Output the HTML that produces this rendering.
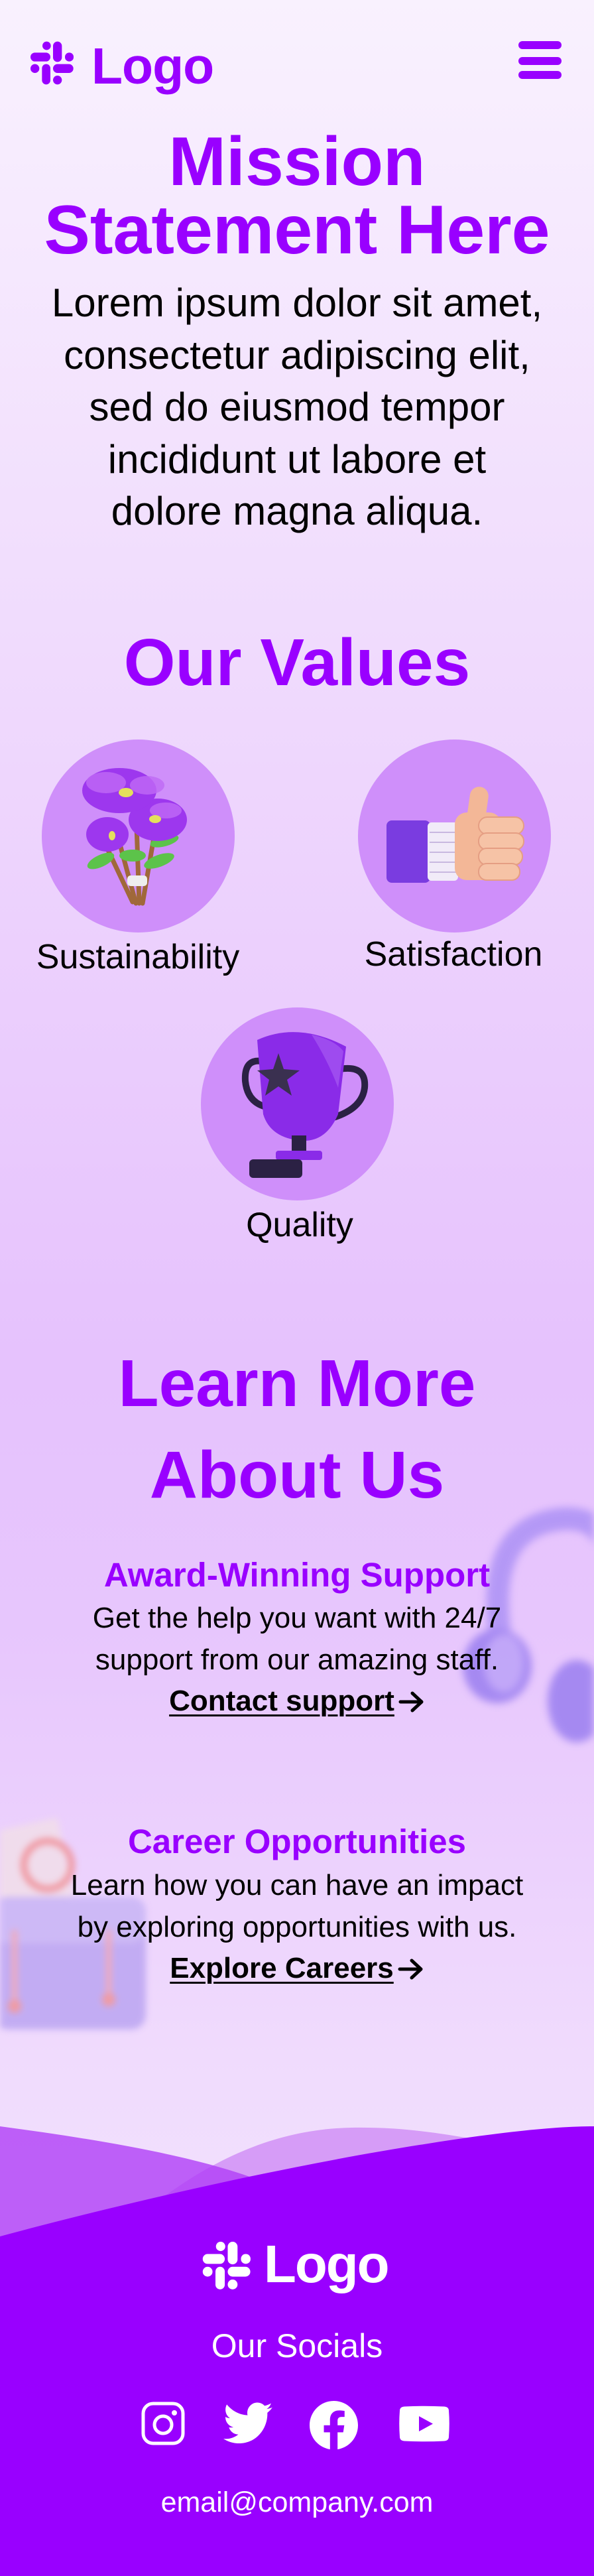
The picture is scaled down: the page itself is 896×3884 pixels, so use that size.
<!DOCTYPE html>
<html><head><meta charset="utf-8">
<style>
*{margin:0;padding:0;box-sizing:border-box}
html,body{width:896px;height:3884px;overflow:hidden}
body{position:relative;font-family:"Liberation Sans",Arial,sans-serif;
background:linear-gradient(180deg,#f9f1fe 0px,#f1defd 850px,#edd3fd 1300px,#e6c2fd 2050px,#e7c6fd 2450px,#f0dbfd 3100px,#f1dffd 3300px);}
.a{position:absolute}
.c{position:absolute;left:0;width:896px;text-align:center;white-space:nowrap}
.p{color:#9900ff;font-weight:bold}
.circ{position:absolute;width:291px;height:291px;border-radius:50%;background:#cf8ffa}
.lbl{position:absolute;font-size:52px;line-height:60px;color:#000;white-space:nowrap;transform:translateX(-50%)}
.body{font-size:44px;line-height:62.5px;color:#000}
.lnk{font-weight:bold}
.lnk u{text-decoration:underline;text-decoration-thickness:3px;text-underline-offset:6px}
.arr{display:inline-block;vertical-align:-4px;margin-left:6px}
</style></head><body>

<svg class="a" style="left:30px;top:50px" width="100" height="100" viewBox="0 0 300 300">
<g fill="#9900ff">
<rect x="150" y="38" width="40" height="92" rx="20"/>
<rect x="102" y="38" width="38" height="38" rx="19"/>
<rect x="48" y="88" width="90" height="40" rx="20"/>
<rect x="204" y="88" width="39" height="40" rx="19"/>
<rect x="48" y="140" width="40" height="40" rx="20"/>
<rect x="100" y="140" width="38" height="92" rx="19"/>
<rect x="150" y="140" width="92" height="40" rx="20"/>
<rect x="150" y="192" width="40" height="40" rx="20"/>
</g></svg>
<div class="a p" style="left:138px;top:62px;font-size:77px;line-height:76px;letter-spacing:-1px">Logo</div>
<svg class="a" style="left:780px;top:60px" width="70" height="62">
<g fill="#9900ff"><rect x="2" y="2" width="65" height="12" rx="6"/><rect x="2" y="26" width="65" height="12" rx="6"/><rect x="2" y="47" width="65" height="12" rx="6"/></g></svg>

<div class="c p" style="top:193px;font-size:104px;line-height:103px">Mission<br>Statement Here</div>
<div class="c" style="top:418px;font-size:60px;line-height:78.5px;color:#000">Lorem ipsum dolor sit amet,<br>consectetur adipiscing elit,<br>sed do eiusmod tempor<br>incididunt ut labore et<br>dolore magna aliqua.</div>

<div class="c p" style="top:939px;font-size:100px;line-height:120px">Our Values</div>

<div class="circ" style="left:63px;top:1115px"></div>
<div class="circ" style="left:540px;top:1115px"></div>
<div class="circ" style="left:303px;top:1519px"></div>

<svg class="a" style="left:0;top:0" width="896" height="1900">
<g stroke="#a0683a" stroke-width="7" fill="none" stroke-linecap="round">
<path d="M205 1362 L172 1240"/><path d="M210 1362 L205 1215"/><path d="M215 1362 L236 1240"/><path d="M200 1360 L155 1265"/>
</g>
<rect x="192" y="1320" width="30" height="16" rx="5" fill="#eee"/>
<g fill="#5cc34a">
<ellipse cx="152" cy="1298" rx="22" ry="9" transform="rotate(-25 152 1298)"/>
<ellipse cx="240" cy="1298" rx="24" ry="9" transform="rotate(-20 240 1298)"/>
<ellipse cx="248" cy="1268" rx="22" ry="8" transform="rotate(-15 248 1268)"/>
<ellipse cx="200" cy="1290" rx="20" ry="9"/>
</g>
<g fill="#9d37ee">
<ellipse cx="162" cy="1258" rx="32" ry="26"/>
<ellipse cx="238" cy="1236" rx="44" ry="32"/>
<ellipse cx="180" cy="1192" rx="56" ry="34"/>
</g>
<g fill="#c06af6" opacity=".8">
<ellipse cx="160" cy="1180" rx="30" ry="16"/>
<ellipse cx="222" cy="1184" rx="26" ry="14"/>
<ellipse cx="250" cy="1222" rx="24" ry="12"/>
</g>
<g fill="#e4e05c"><ellipse cx="190" cy="1195" rx="11" ry="7"/><ellipse cx="234" cy="1235" rx="9" ry="6"/><ellipse cx="169" cy="1260" rx="5" ry="7"/></g>

<rect x="583" y="1237" width="66" height="94" rx="8" fill="#7a3ce0"/>
<rect x="645" y="1240" width="46" height="88" rx="6" fill="#f1ebf8"/>
<g stroke="#c8b8e0" stroke-width="2"><line x1="648" y1="1255" x2="688" y2="1255"/><line x1="648" y1="1270" x2="688" y2="1270"/><line x1="648" y1="1285" x2="688" y2="1285"/><line x1="648" y1="1300" x2="688" y2="1300"/><line x1="648" y1="1315" x2="688" y2="1315"/></g>
<rect x="686" y="1225" width="70" height="102" rx="18" fill="#f3b797"/>
<rect x="706" y="1186" width="28" height="68" rx="14" fill="#f3b797" transform="rotate(8 720 1220)"/>
<g fill="#f6c3a6" stroke="#e59e83" stroke-width="2">
<rect x="722" y="1232" width="68" height="26" rx="13"/>
<rect x="722" y="1256" width="68" height="25" rx="12"/>
<rect x="722" y="1279" width="66" height="25" rx="12"/>
<rect x="722" y="1302" width="62" height="25" rx="12"/>
</g>

<g fill="none" stroke="#2b2144" stroke-width="10" stroke-linecap="round">
<path d="M395 1600 Q368 1596 370 1630 Q373 1660 398 1668"/>
<path d="M512 1612 Q553 1605 550 1640 Q546 1675 492 1688"/>
</g>
<path d="M388 1568 Q450 1540 522 1578 L510 1680 Q492 1722 455 1720 Q408 1716 397 1680 Z" fill="#8a2be8"/>
<path d="M470 1560 Q505 1568 518 1585 L510 1640 Q495 1600 470 1560Z" fill="#a65af2" opacity=".7"/>
<path d="M420 1588 L428 1612 L452 1614 L433 1628 L440 1652 L420 1638 L400 1652 L406 1628 L388 1614 L412 1612 Z" fill="#3a3050"/>
<rect x="440" y="1712" width="22" height="30" fill="#2b2144"/>
<rect x="416" y="1735" width="70" height="14" rx="4" fill="#8a2be8"/>
<rect x="376" y="1748" width="80" height="28" rx="6" fill="#2b2144"/>
</svg>

<div class="lbl" style="left:208px;top:1413px">Sustainability</div>
<div class="lbl" style="left:684px;top:1409px">Satisfaction</div>
<div class="lbl" style="left:452px;top:1817px">Quality</div>

<div class="c p" style="top:2017px;font-size:100px;line-height:138px">Learn More<br>About Us</div>

<svg class="a" style="left:660px;top:2260px;filter:blur(6px);opacity:.75" width="236" height="390">
<path d="M95 210 Q70 40 190 30 Q236 28 250 60" fill="none" stroke="#a48af4" stroke-width="34" stroke-linecap="round"/>
<ellipse cx="90" cy="252" rx="52" ry="56" fill="#8f74ee"/>
<ellipse cx="100" cy="248" rx="30" ry="44" fill="#b59cf7"/>
<ellipse cx="210" cy="305" rx="44" ry="62" fill="#8f74ee"/>
</svg>
<svg class="a" style="left:0;top:2740px;filter:blur(5px);opacity:.8" width="240" height="330">
<rect x="-20" y="12" width="120" height="120" fill="#f2dfe8" transform="rotate(-12 40 70)"/>
<circle cx="72" cy="72" r="36" fill="none" stroke="#f08a8a" stroke-width="10"/>
<rect x="-10" y="120" width="230" height="200" rx="22" fill="#b8a2f1"/>
<rect x="-10" y="120" width="230" height="70" rx="22" fill="#c6b3f5"/>
<rect x="18" y="170" width="8" height="110" fill="#f4a0a8"/>
<rect x="160" y="170" width="8" height="110" fill="#f4a0a8"/>
<circle cx="22" cy="285" r="10" fill="#f28c8c"/><circle cx="164" cy="275" r="10" fill="#f28c8c"/>
</svg>

<div class="c p" style="top:2345px;font-size:51px;line-height:60px">Award-Winning Support</div>
<div class="c body" style="top:2409px">Get the help you want with 24/7<br>support from our amazing staff.<br><span class="lnk"><u>Contact support</u><svg class="arr" width="40" height="34" viewBox="0 0 40 34"><path d="M3 17 H35 M21 4 L35 17 L21 30" fill="none" stroke="#000" stroke-width="5" stroke-linecap="round" stroke-linejoin="round"/></svg></span></div>

<div class="c p" style="top:2747px;font-size:51px;line-height:60px">Career Opportunities</div>
<div class="c body" style="top:2812px">Learn how you can have an impact<br>by exploring opportunities with us.<br><span class="lnk"><u>Explore Careers</u><svg class="arr" width="40" height="34" viewBox="0 0 40 34"><path d="M3 17 H35 M21 4 L35 17 L21 30" fill="none" stroke="#000" stroke-width="5" stroke-linecap="round" stroke-linejoin="round"/></svg></span></div>

<svg class="a" style="left:0;top:3184px" width="896" height="700" viewBox="0 3184 896 700">
<path d="M250 3310 C340 3245 430 3210 530 3208 C600 3207 650 3214 720 3226 L720 3420 L250 3420 Z" fill="#d69cf7"/>
<path d="M0 3206 C150 3226 290 3250 385 3285 L385 3420 L0 3420 Z" fill="#b03ef6" opacity=".8"/>
<path d="M0 3372 C200 3318 450 3262 646 3232 C760 3214 840 3206 896 3206 L896 3884 L0 3884 Z" fill="#9900ff"/>
</svg>
<svg class="a" style="left:288px;top:3366px" width="111" height="111" viewBox="0 0 300 300">
<g fill="#fff">
<rect x="150" y="38" width="40" height="92" rx="20"/>
<rect x="102" y="38" width="38" height="38" rx="19"/>
<rect x="48" y="88" width="90" height="40" rx="20"/>
<rect x="204" y="88" width="39" height="40" rx="19"/>
<rect x="48" y="140" width="40" height="40" rx="20"/>
<rect x="100" y="140" width="38" height="92" rx="19"/>
<rect x="150" y="140" width="92" height="40" rx="20"/>
<rect x="150" y="192" width="40" height="40" rx="20"/>
</g></svg>
<div class="a" style="left:398px;top:3374px;font-size:80px;line-height:80px;font-weight:bold;color:#fff;letter-spacing:-2px">Logo</div>
<div class="c" style="top:3507px;font-size:50px;line-height:60px;color:#fff">Our Socials</div>

<svg class="a" style="left:213px;top:3621px" width="66" height="66" viewBox="0 0 66 66">
<rect x="3" y="3" width="60" height="60" rx="15" fill="none" stroke="#fff" stroke-width="5"/>
<circle cx="33" cy="35" r="13" fill="none" stroke="#fff" stroke-width="5"/>
<circle cx="50" cy="17" r="4" fill="#fff"/>
</svg>
<svg class="a" style="left:334px;top:3620px" width="78" height="70" viewBox="0 2 24 21" preserveAspectRatio="none">
<path fill="#fff" d="M23.643 4.937c-.835.37-1.732.62-2.675.733.962-.576 1.7-1.49 2.048-2.578-.9.534-1.897.922-2.958 1.13-.85-.904-2.060-1.470-3.400-1.470-2.572 0-4.658 2.086-4.658 4.660 0 .364.042.718.12 1.060-3.873-.195-7.304-2.050-9.602-4.868-.4.690-.63 1.490-.63 2.342 0 1.616.823 3.043 2.072 3.878-.764-.025-1.482-.234-2.110-.583v.060c0 2.257 1.605 4.140 3.737 4.568-.392.106-.803.162-1.227.162-.3 0-.593-.028-.877-.082.593 1.850 2.313 3.198 4.352 3.234-1.595 1.250-3.604 1.995-5.786 1.995-.376 0-.747-.022-1.112-.065 2.062 1.323 4.510 2.093 7.140 2.093 8.570 0 13.255-7.098 13.255-13.254 0-.2-.005-.402-.014-.602.910-.658 1.700-1.477 2.323-2.410z"/>
</svg>
<svg class="a" style="left:467px;top:3620px" width="73" height="73" viewBox="0 0 24 24">
<path fill="#fff" d="M24 12.07C24 5.41 18.63 0 12 0S0 5.4 0 12.07C0 18.1 4.39 23.1 10.13 24v-8.44H7.08v-3.49h3.04V9.41c0-3.02 1.8-4.7 4.54-4.7 1.31 0 2.68.24 2.68.24v2.97h-1.5c-1.5 0-1.96.93-1.96 1.89v2.26h3.32l-.53 3.5h-2.8V24C19.62 23.1 24 18.1 24 12.07"/>
</svg>
<svg class="a" style="left:600px;top:3627px" width="80" height="55" viewBox="0 0 80 55">
<path d="M3 8 Q3 2 10 1.5 Q40 0 70 1.5 Q77 2 77 8 Q78.5 27 77 47 Q77 53 70 53.5 Q40 55 10 53.5 Q3 53 3 47 Q1.5 27 3 8Z" fill="#fff"/>
<path d="M32 16 L53 27.5 L32 39 Z" fill="#9900ff"/>
</svg>

<div class="c" style="top:3748px;font-size:43px;line-height:50px;color:#fff">email@company.com</div>
</body></html>
